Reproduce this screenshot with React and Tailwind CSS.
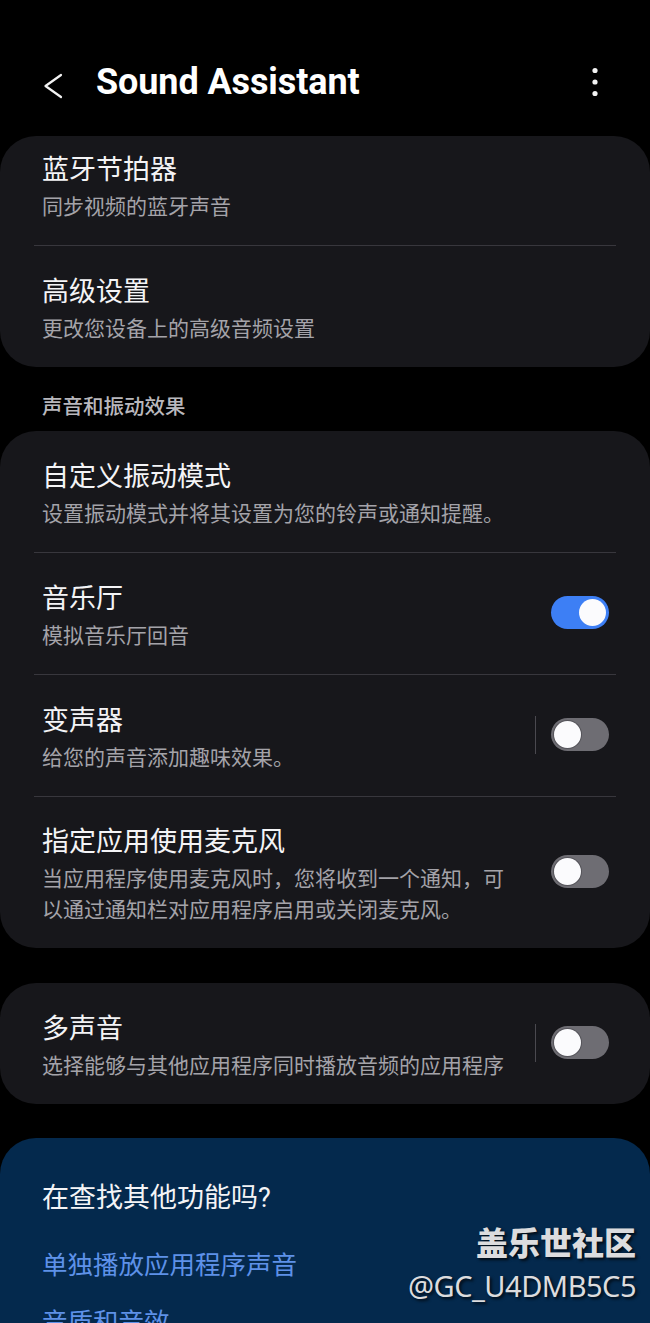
import { Fragment } from "react";

const cjk = "font-['Roboto','Noto_Sans_CJK_SC',sans-serif]";

function Toggle({ on }) {
  return (
    <div
      className={`relative w-[58px] h-[33px] rounded-full shrink-0 ${
        on ? "bg-[#3d7ff5]" : "bg-[#6e6d73]"
      }`}
    >
      <div
        className={`absolute top-[3px] w-[27px] h-[27px] rounded-full bg-[#fbfbfd] ${
          on ? "right-[3px]" : "left-[3px] ring-1 ring-[#55545a]"
        }`}
      />
    </div>
  );
}

function Row({ title, sub, toggle, on, split, first, pt }) {
  const top = first ? "pt-[16px]" : pt || "pt-[28px]";
  return (
    <div className={`flex items-center pl-[42px] pr-[41px] pb-[22px] ${top}`}>
      <div className="flex-1 min-w-0">
        <div className="text-[27px] leading-[36px] text-[#f4f4f6]">{title}</div>
        <div className="mt-[4px] text-[21px] leading-[31px] text-[#a4a3a9]">
          {sub}
        </div>
      </div>
      {toggle && (
        <div className="flex items-center mb-[8px]">
          {split ? (
            <div className="ml-[16px] mr-[15px] w-px h-[38px] bg-[#4a494f]" />
          ) : (
            <div className="w-[32px]" />
          )}
          <Toggle on={on} />
        </div>
      )}
    </div>
  );
}

function Card({ rows }) {
  return (
    <div className="bg-[#17171b] rounded-[36px]">
      {rows.map((r, i) => (
        <Fragment key={r.title}>
          {i > 0 && <div className="mx-[34px] h-px bg-[#38373d]" />}
          <Row {...r} first={i === 0 && r.first} />
        </Fragment>
      ))}
    </div>
  );
}

export default function App() {
  return (
    <div className={`relative h-[1323px] overflow-hidden bg-black ${cjk}`}>
      {/* Header */}
      <div className="flex items-center h-[44px] mt-[60px] mb-[32px] pl-[43px] pr-[50px]">
        <svg width="20" height="26" viewBox="0 0 20 26" className="mt-[8px] shrink-0">
          <path
            d="M18 2 L2.5 13 L18 24"
            fill="none"
            stroke="#f2f2f2"
            strokeWidth="2.2"
            strokeLinecap="round"
            strokeLinejoin="round"
          />
        </svg>
        <h1 className="ml-[33px] text-[36px] leading-[44px] font-bold text-white tracking-[-0.1px]">
          Sound Assistant
        </h1>
        <svg width="10" height="30" viewBox="0 0 10 30" className="ml-auto">
          <circle cx="5" cy="3.5" r="2.6" fill="#f2f2f2" />
          <circle cx="5" cy="15" r="2.6" fill="#f2f2f2" />
          <circle cx="5" cy="26.5" r="2.6" fill="#f2f2f2" />
        </svg>
      </div>

      <Card
        rows={[
          { title: "蓝牙节拍器", sub: "同步视频的蓝牙声音", first: true },
          { title: "高级设置", sub: "更改您设备上的高级音频设置" },
        ]}
      />

      <div className="mt-[26px] mb-[10px] pl-[42px] text-[20.5px] leading-[28px] font-medium text-[#b9b8bd]">
        声音和振动效果
      </div>

      <Card
        rows={[
          {
            title: "自定义振动模式",
            sub: "设置振动模式并将其设置为您的铃声或通知提醒。",
          },
          { title: "音乐厅", sub: "模拟音乐厅回音", toggle: true, on: true },
          {
            title: "变声器",
            sub: "给您的声音添加趣味效果。",
            toggle: true,
            split: true,
          },
          {
            title: "指定应用使用麦克风",
            sub: "当应用程序使用麦克风时，您将收到一个通知，可以通过通知栏对应用程序启用或关闭麦克风。",
            toggle: true,
            pt: "pt-[27px]",
          },
        ]}
      />

      <div className="mt-[35px]">
        <Card
          rows={[
            {
              title: "多声音",
              sub: "选择能够与其他应用程序同时播放音频的应用程序",
              toggle: true,
              split: true,
            },
          ]}
        />
      </div>

      {/* Looking for something else */}
      <div className="mt-[34px] bg-[#04294d] rounded-t-[36px] pt-[42px] pl-[42px] pb-[40px]">
        <div className="text-[27px] leading-[36px] text-[#f4f4f6]">
          在查找其他功能吗?
        </div>
        <div className="mt-[32px] text-[25.5px] leading-[34px] text-[#5e91e8]">
          单独播放应用程序声音
        </div>
        <div className="mt-[23px] text-[25.5px] leading-[34px] text-[#5e91e8]">
          音质和音效
        </div>
      </div>

      {/* Watermark */}
      <div className="absolute right-[14px] top-[1222px] text-right text-[#dcdcde] [text-shadow:2px_2px_3px_rgba(0,0,0,0.75)]">
        <div className="text-[32px] leading-[44px] font-black">盖乐世社区</div>
        <div className="font-['Noto_Sans','Noto_Sans_CJK_SC',sans-serif] text-[29px] leading-[40px] tracking-[-0.5px]">
          @GC_U4DMB5C5
        </div>
      </div>
    </div>
  );
}
